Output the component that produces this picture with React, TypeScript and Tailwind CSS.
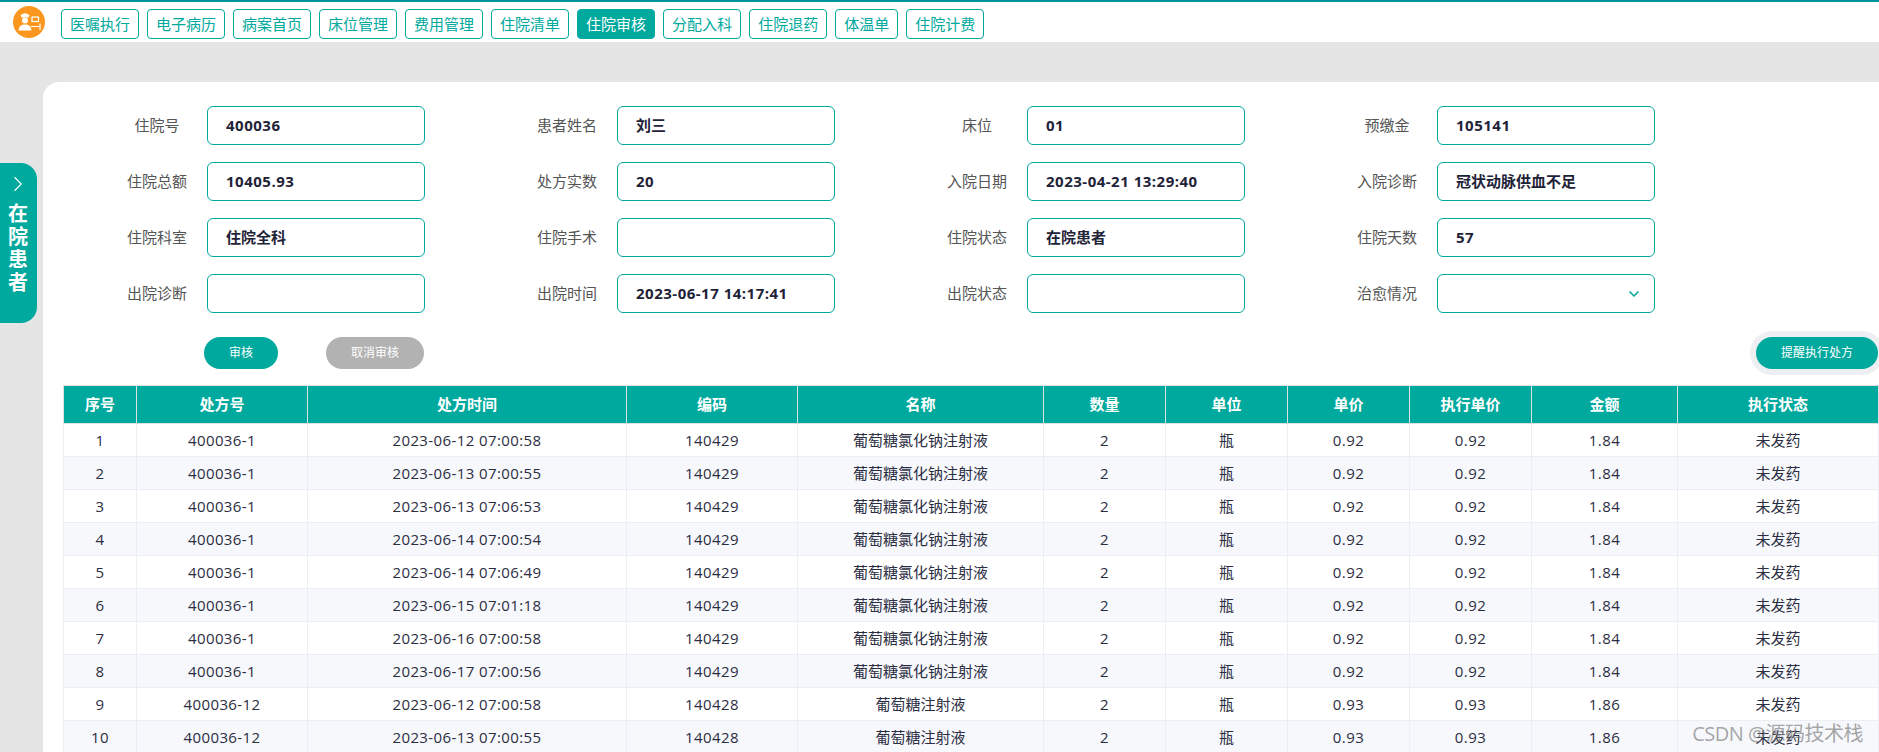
import { ChevronRight, ChevronDown } from "lucide-react";

const tabs = ["医嘱执行", "电子病历", "病案首页", "床位管理", "费用管理", "住院清单", "住院审核", "分配入科", "住院退药", "体温单", "住院计费"];

const fields: { label: string; value: string; select?: boolean }[] = [
  { label: "住院号", value: "400036" },
  { label: "患者姓名", value: "刘三" },
  { label: "床位", value: "01" },
  { label: "预缴金", value: "105141" },
  { label: "住院总额", value: "10405.93" },
  { label: "处方实数", value: "20" },
  { label: "入院日期", value: "2023-04-21 13:29:40" },
  { label: "入院诊断", value: "冠状动脉供血不足" },
  { label: "住院科室", value: "住院全科" },
  { label: "住院手术", value: "" },
  { label: "住院状态", value: "在院患者" },
  { label: "住院天数", value: "57" },
  { label: "出院诊断", value: "" },
  { label: "出院时间", value: "2023-06-17 14:17:41" },
  { label: "出院状态", value: "" },
  { label: "治愈情况", value: "", select: true },
];

const columns = [
  { title: "序号", width: 73 },
  { title: "处方号", width: 171 },
  { title: "处方时间", width: 319 },
  { title: "编码", width: 171 },
  { title: "名称", width: 246 },
  { title: "数量", width: 122 },
  { title: "单位", width: 122 },
  { title: "单价", width: 122 },
  { title: "执行单价", width: 122 },
  { title: "金额", width: 146 },
  { title: "执行状态", width: 201 },
];

const glucoseSalt = { code: "140429", name: "葡萄糖氯化钠注射液", price: "0.92", total: "1.84" };
const glucose = { code: "140428", name: "葡萄糖注射液", price: "0.93", total: "1.86" };

const rows = [
  { no: "400036-1", time: "2023-06-12 07:00:58", ...glucoseSalt },
  { no: "400036-1", time: "2023-06-13 07:00:55", ...glucoseSalt },
  { no: "400036-1", time: "2023-06-13 07:06:53", ...glucoseSalt },
  { no: "400036-1", time: "2023-06-14 07:00:54", ...glucoseSalt },
  { no: "400036-1", time: "2023-06-14 07:06:49", ...glucoseSalt },
  { no: "400036-1", time: "2023-06-15 07:01:18", ...glucoseSalt },
  { no: "400036-1", time: "2023-06-16 07:00:58", ...glucoseSalt },
  { no: "400036-1", time: "2023-06-17 07:00:56", ...glucoseSalt },
  { no: "400036-12", time: "2023-06-12 07:00:58", ...glucose },
  { no: "400036-12", time: "2023-06-13 07:00:55", ...glucose },
];

// digits run a bit wider than Open Sans in the original
const isLatin = (text: string) => /^[\x00-\x7f]+$/.test(text);

function Logo() {
  return (
    <svg width="32" height="32" viewBox="0 0 32 32" className="shrink-0">
      <circle cx="16" cy="16" r="16" fill="#fb961f" />
      <path d="M7.5 9 L12 7 L16.5 9 L15.5 11.5 L8.5 11.5 Z" fill="#fff" />
      <circle cx="12" cy="14.5" r="3" fill="#fff" />
      <path d="M5.5 24.5 C6 20 8.5 18.5 12 18.5 C15.5 18.5 18 20 18.5 24.5 Z" fill="#fff" />
      <rect x="19" y="11" width="6.5" height="4.5" fill="none" stroke="#fff" strokeWidth="1.2" />
      <path d="M18 20.5 H26.5 M27 17.5 V24" stroke="#fff" strokeWidth="1.2" fill="none" />
    </svg>
  );
}

export default function App() {
  return (
    <div className="relative h-[752px] w-full overflow-hidden bg-[#e5e5e5] font-['Open_Sans','Noto_Sans_CJK_SC',sans-serif]">
      <header className="flex h-[42px] items-start border-t-2 border-[#00959a] bg-white pl-[13px] pt-[7px]">
        <div className="-mt-[3px] mr-[16px]">
          <Logo />
        </div>
        <nav className="flex gap-2">
          {tabs.map((tab) => (
            <button
              key={tab}
              className={`flex h-[30px] items-center justify-center rounded border border-[#00a99d] px-2 text-[15px] ${
                tab === "住院审核" ? "bg-[#00a99d] text-white" : "bg-white text-[#00a99d]"
              }`}
            >
              {tab}
            </button>
          ))}
        </nav>
      </header>

      <div className="absolute left-0 top-[163px] flex h-[160px] w-[37px] flex-col items-center rounded-r-2xl bg-[#00a99d] pr-[1px] pt-[8px] text-white">
        <ChevronRight size={26} strokeWidth={1} />
        <div className="mt-[5px] flex flex-col text-[20px] font-bold leading-[23px]">
          <span>在</span>
          <span>院</span>
          <span>患</span>
          <span>者</span>
        </div>
      </div>

      <main className="ml-[43px] mt-[40px] rounded-tl-2xl bg-white pl-[20px] pr-px pt-[24px]">
        <div className="grid grid-cols-[repeat(4,410px)] gap-y-[17px] pl-[44px]">
          {fields.map((field) => (
            <div key={field.label} className="flex items-center">
              <span className="w-[100px] text-center text-[15px] text-[#555]">{field.label}</span>
              <div className="flex h-[39px] w-[218px] items-center justify-between rounded-md border border-[#00a99d] pl-[18px] pr-[12px] text-[15px] font-bold text-[#1f2338]">
                <span className={isLatin(field.value) ? "tracking-[0.5px]" : ""}>{field.value}</span>
                {field.select && <ChevronDown size={16} strokeWidth={2.5} className="text-[#00a99d]" />}
              </div>
            </div>
          ))}
        </div>

        <div className="mt-[24px] flex items-center pl-[141px]">
          <button className="h-[32px] w-[74px] rounded-full bg-[#00a99d] text-xs text-white">审核</button>
          <button className="ml-[48px] h-[32px] w-[98px] rounded-full bg-[#b2b2b2] text-xs text-white">取消审核</button>
          <button className="ml-auto h-[32px] w-[122px] rounded-full bg-[#00a99d] text-xs text-white ring-[6px] ring-[#eeeff3]">
            提醒执行处方
          </button>
        </div>

        <table className="mt-[16px] w-[1815px] table-fixed border-collapse text-[15px] text-[#2b2d42]">
          <colgroup>
            {columns.map((col) => (
              <col key={col.title} width={col.width} />
            ))}
          </colgroup>
          <thead>
            <tr className="h-[38px] bg-[#00a99d] text-white">
              {columns.map((col) => (
                <th key={col.title} className="border border-[#e0e0e0] p-0 text-center text-[15px] font-bold">
                  {col.title}
                </th>
              ))}
            </tr>
          </thead>
          <tbody>
            {rows.map((row, i) => (
              <tr key={i} className={`h-[33px] ${i % 2 === 1 ? "bg-[#f7f8fc]" : "bg-white"}`}>
                {[String(i + 1), row.no, row.time, row.code, row.name, "2", "瓶", row.price, row.price, row.total, "未发药"].map((cell, j) => (
                  <td key={j} className={`border border-[#ebeef5] p-0 text-center ${isLatin(cell) ? "tracking-[0.4px]" : ""}`}>
                    {cell}
                  </td>
                ))}
              </tr>
            ))}
          </tbody>
        </table>
      </main>

      <span className="absolute bottom-[3px] right-[16px] text-[20px] tracking-[-0.5px] text-[#808080]/70">CSDN @源码技术栈</span>
    </div>
  );
}
